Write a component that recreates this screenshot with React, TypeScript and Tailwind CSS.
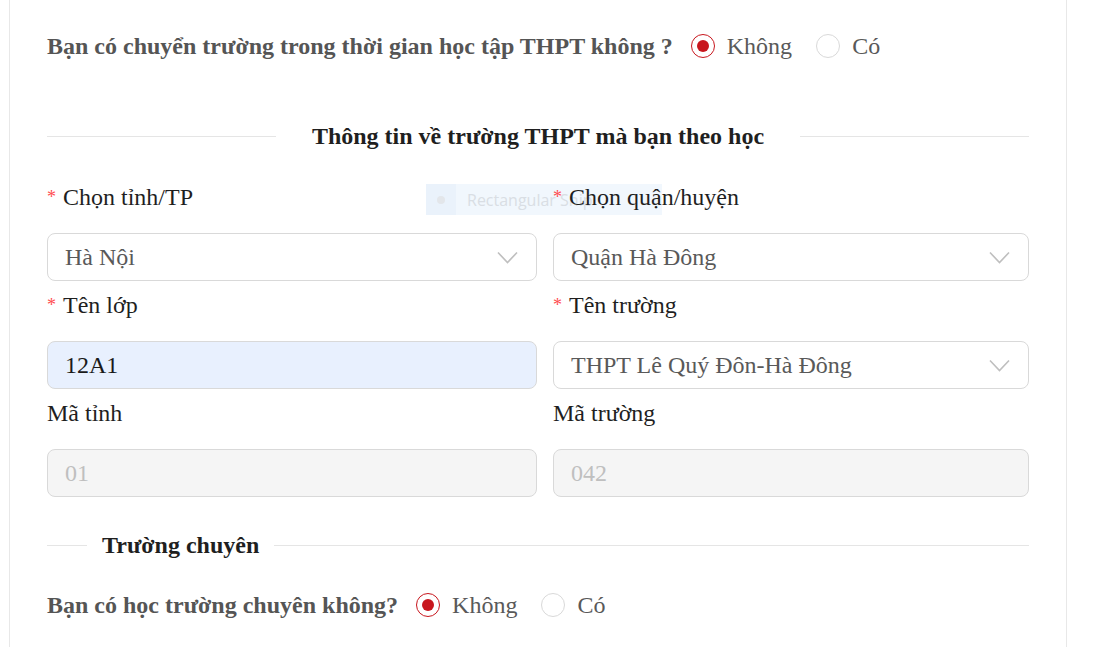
const Radio = ({ checked, label }: { checked?: boolean; label: string }) => (
  <label className="flex items-center gap-3 text-[24px] text-[#595959]">
    <span
      className={
        checked
          ? "flex h-6 w-6 items-center justify-center rounded-full border border-[#c8161d] bg-white"
          : "flex h-6 w-6 items-center justify-center rounded-full border border-[#d9d9d9] bg-white"
      }
    >
      {checked && <span className="h-3 w-3 rounded-full bg-[#c8161d]" />}
    </span>
    <span className="leading-8">{label}</span>
  </label>
);

const FieldLabel = ({ text, required }: { text: string; required?: boolean }) => (
  <div className="relative mb-5 flex h-8 items-center text-[24px] leading-8 text-[#1f1f1f]">
    {required && <span className="mr-[7px] text-[18px] text-[#ff4d4f]">*</span>}
    {text}
  </div>
);

const Chevron = () => (
  <svg width="21" height="13" viewBox="0 0 21 13" fill="none">
    <path d="M1 1.5 L10.5 11.5 L20 1.5" stroke="#bfbfbf" strokeWidth="1.6" />
  </svg>
);

const Select = ({ value }: { value: string }) => (
  <div className="flex h-12 items-center justify-between rounded-lg border border-[#d9d9d9] bg-white pl-[17px] pr-[18px]">
    <span className="text-[24px] text-[#595959]">{value}</span>
    <Chevron />
  </div>
);

const App = () => {
  return (
    <div className="min-h-screen bg-white font-['Liberation_Serif',serif]">
      <div className="relative ml-[9px] min-h-[647px] w-[1058px] border-x border-[#e8e8e8] px-[37px] pt-[30px]">
        {/* snipping tool hint, sits behind the labels */}
        <div className="absolute left-[416px] top-[184px] flex h-[31px] w-[236px] items-center bg-[#eef5fd]/80 font-['Open_Sans',sans-serif]">
          <div className="flex h-full w-[30px] items-center justify-center bg-[#e6effa]/60">
            <span className="h-2 w-2 rounded-full bg-[#e3e6ea]" />
          </div>
          <span className="ml-[11px] text-[16px] text-[#d9dee4]">Rectangular Snip</span>
        </div>

        <div className="flex h-8 items-center">
          <span className="text-[24px] font-bold text-[#555]">
            Bạn có chuyển trường trong thời gian học tập THPT không ?
          </span>
          <div className="ml-[18px] flex items-center gap-[24px]">
            <Radio checked label="Không" />
            <Radio label="Có" />
          </div>
        </div>

        <div className="mt-[58px] flex h-8 items-center gap-9">
          <div className="h-px flex-1 bg-[#e5e5e5]" />
          <span className="text-[24px] font-bold text-[#1f1f1f]">
            Thông tin về trường THPT mà bạn theo học
          </span>
          <div className="h-px flex-1 bg-[#e5e5e5]" />
        </div>

        <div className="mt-[29px] grid grid-cols-[490px_1fr] gap-x-4 gap-y-2">
          <div>
            <FieldLabel required text="Chọn tỉnh/TP" />
            <Select value="Hà Nội" />
          </div>
          <div>
            <FieldLabel required text="Chọn quận/huyện" />
            <Select value="Quận Hà Đông" />
          </div>
          <div>
            <FieldLabel required text="Tên lớp" />
            <div className="flex h-12 items-center rounded-lg border border-[#d9d9d9] bg-[#e8f0fe] pl-[17px] text-[24px] text-[#1a1a1a]">
              12A1
            </div>
          </div>
          <div>
            <FieldLabel required text="Tên trường" />
            <Select value="THPT Lê Quý Đôn-Hà Đông" />
          </div>
          <div>
            <FieldLabel text="Mã tỉnh" />
            <div className="flex h-12 items-center rounded-lg border border-[#d9d9d9] bg-[#f5f5f5] pl-[17px] text-[24px] text-[#bfbfbf]">
              01
            </div>
          </div>
          <div>
            <FieldLabel text="Mã trường" />
            <div className="flex h-12 items-center rounded-lg border border-[#d9d9d9] bg-[#f5f5f5] pl-[17px] text-[24px] text-[#bfbfbf]">
              042
            </div>
          </div>
        </div>

        <div className="mt-8 flex h-8 items-center gap-[15px]">
          <div className="h-px w-10 bg-[#e5e5e5]" />
          <span className="text-[24px] font-bold text-[#1f1f1f]">Trường chuyên</span>
          <div className="h-px flex-1 bg-[#e5e5e5]" />
        </div>

        <div className="mt-7 flex h-8 items-center">
          <span className="text-[24px] font-bold text-[#555]">Bạn có học trường chuyên không?</span>
          <div className="ml-[18px] flex items-center gap-[24px]">
            <Radio checked label="Không" />
            <Radio label="Có" />
          </div>
        </div>
      </div>
    </div>
  );
};

export default App;
